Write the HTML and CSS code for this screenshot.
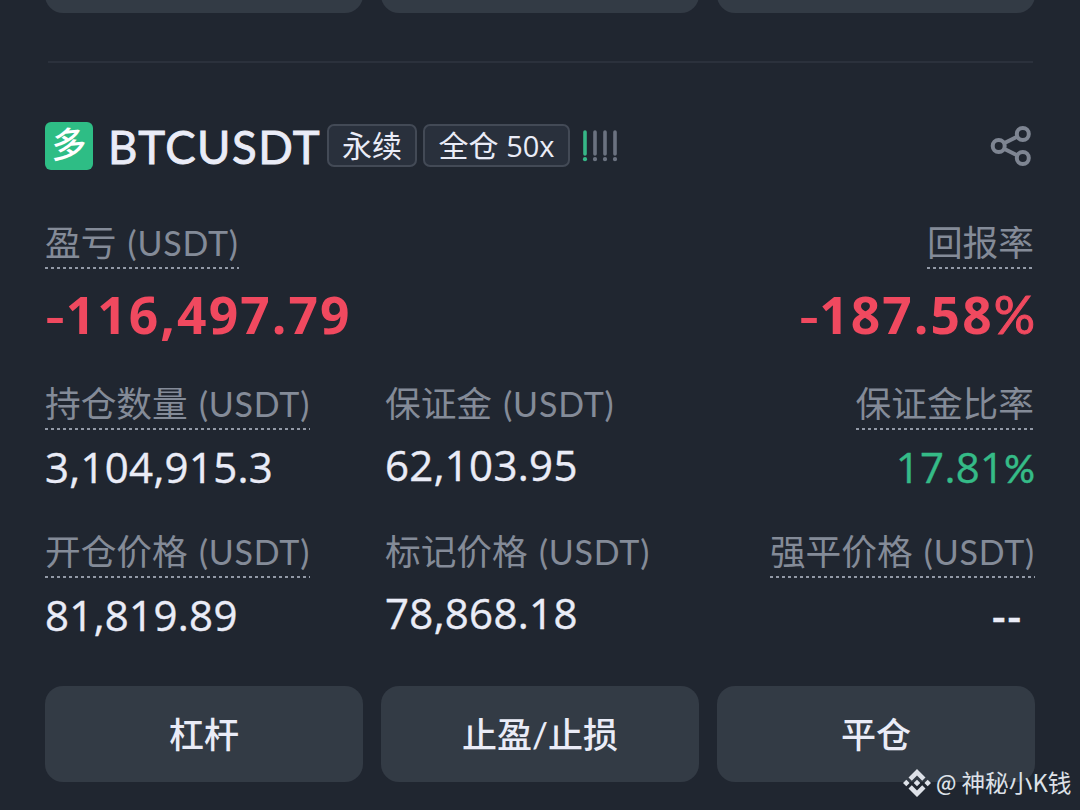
FILE: index.html
```html
<!DOCTYPE html>
<html lang="zh-CN">
<head>
<meta charset="utf-8">
<title>BTCUSDT</title>
<link rel="stylesheet" href="styles.css">
</head>
<body>
<main class="screen">
  <div class="buttons previous"><i class="button"></i><i class="button"></i><i class="button"></i></div>
  <hr class="divider">
  <header class="header">
    <span class="side"><span class="side-text">多</span></span>
    <h1 class="symbol">BTCUSDT</h1>
    <span class="tag tag-type">永续</span>
    <span class="tag tag-mode">全仓 <span class="lever">50x</span></span>
    <svg class="risk" width="38" height="34" viewBox="0 0 38 34" stroke-width="3.6" stroke-linecap="round">
      <g stroke="#36b787"><path d="M3 3V25"/><path d="M3 30v.2" stroke-width="4.2"/></g>
      <g stroke="#6b7280"><path d="M13 3V25M23 3V25M33 3V25"/><path d="M13 30v.2M23 30v.2M33 30v.2" stroke-width="4.2"/></g>
    </svg>
    <svg class="share" width="42" height="42" viewBox="0 0 42 42" fill="none" stroke="#7e8592" stroke-width="4">
      <circle cx="8.7" cy="21" r="6"/><circle cx="32.8" cy="9" r="6"/><circle cx="32.8" cy="33" r="6"/>
      <path d="M14 18.3 27.5 11.5M14 23.7 27.5 30.5"/>
    </svg>
  </header>
  <section class="summary">
    <div class="cell"><div class="label dotted">盈亏 <span class="unit">(USDT)</span></div><div class="big loss"><span class="minus">-</span>116,497.79</div></div>
    <div class="cell end"><div class="label dotted">回报率</div><div class="big"><span class="minus">-</span>187.58<span class="percent">%</span></div></div>
  </section>
  <section class="details">
    <div class="cell"><div class="label dotted">持仓数量 <span class="unit">(USDT)</span></div><div class="value">3,104,915.3</div></div>
    <div class="cell"><div class="label">保证金 <span class="unit">(USDT)</span></div><div class="value raised">62,103.95</div></div>
    <div class="cell end"><div class="label dotted">保证金比率</div><div class="value green">17.81<span class="percent">%</span></div></div>
  </section>
  <section class="details prices">
    <div class="cell"><div class="label dotted">开仓价格 <span class="unit">(USDT)</span></div><div class="value">81,819.89</div></div>
    <div class="cell"><div class="label">标记价格 <span class="unit">(USDT)</span></div><div class="value raised">78,868.18</div></div>
    <div class="cell end flush"><div class="label dotted">强平价格 <span class="unit">(USDT)</span></div><div class="value empty">--</div></div>
  </section>
  <div class="buttons actions"><div class="button">杠杆</div><div class="button">止盈/止损</div><div class="button">平仓</div></div>
  <div class="watermark">
    <svg width="28" height="28" viewBox="0 0 28 28" fill="#dde1e8">
      <path d="M14 0 22.5 8.5 19.2 11.8 14 6.6 8.8 11.8 5.5 8.5Z"/>
      <path d="M14 28 22.5 19.5 19.2 16.2 14 21.4 8.8 16.2 5.5 19.5Z"/>
      <path d="M14 10.7 17.3 14 14 17.3 10.7 14ZM3.3 10.7 6.6 14 3.3 17.3 0 14ZM24.7 10.7 28 14 24.7 17.3 21.4 14Z"/>
    </svg>
    <span class="at">@</span><span>神秘小K钱</span>
  </div>
</main>
</body>
</html>
```
FILE: styles.css
```css
* { box-sizing: border-box; }
body { margin: 0; background: #202630; }
.screen {
  position: relative;
  width: 1080px;
  height: 810px;
  padding: 0 45px;
  overflow: hidden;
  display: flex;
  flex-direction: column;
  color: #eaecf7;
  font-family: Lato, "Noto Sans CJK SC", sans-serif;
}
.buttons { display: grid; grid-template-columns: repeat(3, 318px); gap: 18px; flex: none; }
.button {
  height: 96px;
  padding-bottom: 4px;
  border-radius: 18px;
  background: #333b45;
  display: flex;
  align-items: center;
  justify-content: center;
  font-size: 35px;
  font-weight: 500;
}
.previous { height: 13px; align-content: end; }
.divider { width: 985px; height: 2px; margin: 48px 0 0 3px; border: 0; background: #2b313c; flex: none; }
.header { display: flex; align-items: center; height: 48px; margin-top: 59px; flex: none; }
.side {
  width: 48px; height: 48px; border-radius: 6px; background: #2ebd85;
  font-size: 35px; line-height: 43px; font-weight: 500; text-align: center; color: #fff;
}
.side-text { display: block; transform: skewY(-5deg); }
.symbol {
  width: 219px; margin: 0; padding-left: 15px;
  font-size: 45.5px; line-height: 49px; font-weight: 400; letter-spacing: 1.5px; white-space: nowrap;
  -webkit-text-stroke: .9px;
}
.tag {
  height: 43px; margin-top: -1px; border: 2px solid #434a56; border-radius: 7px; background: #29303c;
  font-size: 30px; line-height: 38px; text-align: center; white-space: nowrap;
}
.tag-type { width: 90px; margin-left: 15px; }
.tag-mode { width: 147px; margin-left: 6px; }
.lever { font-family: "Open Sans", sans-serif; font-size: 29px; }
.risk { margin-left: 12px; }
.share { margin-left: auto; margin-right: 3px; }
.summary { display: flex; justify-content: space-between; height: 161px; padding-top: 52px; flex: none; }
.cell { display: flex; flex-direction: column; align-items: flex-start; }
.cell > * { flex: none; }
.end { align-items: flex-end; padding-right: 1px; }
.flush { padding-right: 0; }
.label { height: 47px; font-size: 35.7px; line-height: 41px; color: #848b98; white-space: nowrap; font-weight: 400; }
.unit { font-size: 34px; letter-spacing: .8px; margin-left: 2px; }
.dotted { background: repeating-linear-gradient(90deg, #9299a6 0 3px, transparent 3px 6px) left bottom / 100% 2px no-repeat; }
.big {
  margin-top: 15px; font-family: "Open Sans", sans-serif; font-size: 51.5px; line-height: 60px;
  font-weight: 700; letter-spacing: 2.1px; color: #f0495f; white-space: nowrap;
}
.loss { margin-left: 2px; }
.minus { display: inline-block; transform: scale(1.15, .8) translateY(2px); }
.big .percent { font-family: Lato, sans-serif; font-weight: 400; letter-spacing: -1px; -webkit-text-stroke: 1px; }
.details { display: grid; grid-template-columns: 340px 300px 350px; height: 148px; padding-top: 52px; flex: none; }
.value {
  margin-top: 12px; font-family: "Open Sans", sans-serif; font-size: 42px; line-height: 50px;
  font-weight: 450; letter-spacing: .3px; white-space: nowrap; -webkit-text-stroke: .4px;
}
.value .percent { font-family: Lato, sans-serif; font-size: 38px; letter-spacing: -1px; }
.raised { margin-top: 10px; }
.green { color: #35bb87; }
.empty { padding-right: 12px; font-weight: 600; letter-spacing: 2px; }
.actions { margin-top: 59px; }
.watermark {
  position: absolute; left: 903px; top: 764px; height: 36px;
  display: flex; align-items: center; color: #dde1e8;
  font-family: "Noto Sans CJK SC", sans-serif;
  font-size: 23.7px; white-space: nowrap;
}
.watermark svg { margin-top: 2px; }
.at { margin: 0 5px; font-size: 21px; font-weight: 500; }
```
